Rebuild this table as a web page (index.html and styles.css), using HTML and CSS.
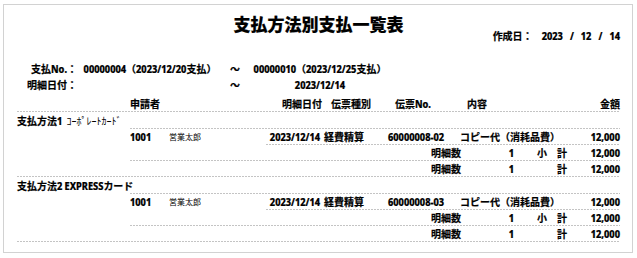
FILE: index.html
```html
<!DOCTYPE html>
<html lang="ja">
<head>
<meta charset="utf-8">
<title>支払方法別支払一覧表</title>
<link rel="stylesheet" href="styles.css">
</head>
<body>
<div class="report">
  <h1 class="title">支払方法別支払一覧表</h1>
  <div class="created"><span class="created-label">作成日：</span><span class="created-date"><span class="n">2023</span><span class="n sl">/</span><span class="n">12</span><span class="n sl">/</span><span class="n">14</span></span></div>
  <div class="cond">
    <div class="cond-row">
      <span class="cond-label">支払<span class="n">No.</span>：</span>
      <span class="cond-from"><span class="n">00000004</span>（<span class="n">2023/12/20</span>支払）</span>
      <span class="cond-tilde">～</span>
      <span class="cond-to"><span class="n">00000010</span>（<span class="n">2023/12/25</span>支払）</span>
    </div>
    <div class="cond-row">
      <span class="cond-label">明細日付：</span>
      <span class="cond-from"></span>
      <span class="cond-tilde">～</span>
      <span class="cond-to"><span class="n">2023/12/14</span></span>
    </div>
  </div>

  <div class="thead dash">
    <span class="c-method"></span>
    <span class="c-applicant">申請者</span>
    <span class="c-date">明細日付</span>
    <span class="c-type">伝票種別</span>
    <span class="c-no">伝票<span class="n">No.</span></span>
    <span class="c-content">内容</span>
    <span class="c-amount">金額</span>
  </div>

  <section class="method">
    <div class="sec-row">
      <span class="sec-label">支払方法<span class="n">1</span> <span class="kana">ｺｰﾎﾟﾚｰﾄｶｰﾄﾞ</span></span>
      <span class="sec-fill dash"></span>
    </div>
    <div class="data-row">
      <span class="code"><span class="n">1001</span></span>
      <span class="name">営業太郎</span>
      <div class="detail dash">
        <span class="c-date"><span class="n">2023/12/14</span></span>
        <span class="c-type">経費精算</span>
        <span class="c-no"><span class="n">60000008-02</span></span>
        <span class="c-content">コピー代（消耗品費）</span>
        <span class="c-amount"><span class="n">12,000</span></span>
      </div>
    </div>
    <div class="sum-row sub dash">
      <span class="s-label">明細数</span>
      <span class="s-count"><span class="n">1</span></span>
      <span class="s-kind">小　計</span>
      <span class="s-amount"><span class="n">12,000</span></span>
    </div>
    <div class="sum-row total dash">
      <span class="s-label">明細数</span>
      <span class="s-count"><span class="n">1</span></span>
      <span class="s-kind">計</span>
      <span class="s-amount"><span class="n">12,000</span></span>
    </div>
  </section>

  <section class="method">
    <div class="sec-row">
      <span class="sec-label">支払方法<span class="n">2</span> <span class="n">EXPRESS</span>カード</span>
      <span class="sec-fill dash"></span>
    </div>
    <div class="data-row">
      <span class="code"><span class="n">1001</span></span>
      <span class="name">営業太郎</span>
      <div class="detail dash">
        <span class="c-date"><span class="n">2023/12/14</span></span>
        <span class="c-type">経費精算</span>
        <span class="c-no"><span class="n">60000008-03</span></span>
        <span class="c-content">コピー代（消耗品費）</span>
        <span class="c-amount"><span class="n">12,000</span></span>
      </div>
    </div>
    <div class="sum-row sub dash">
      <span class="s-label">明細数</span>
      <span class="s-count"><span class="n">1</span></span>
      <span class="s-kind">小　計</span>
      <span class="s-amount"><span class="n">12,000</span></span>
    </div>
    <div class="sum-row total dash">
      <span class="s-label">明細数</span>
      <span class="s-count"><span class="n">1</span></span>
      <span class="s-kind">計</span>
      <span class="s-amount"><span class="n">12,000</span></span>
    </div>
  </section>
</div>
</body>
</html>
```

FILE: styles.css
```css
* { box-sizing: border-box; }
html, body { margin: 0; padding: 0; background: #fff; }
body {
  font-family: "Noto Sans CJK JP", "Noto Sans", sans-serif;
  font-size: 10px;
  font-weight: 700;
  color: #000;
}
/* narrow latin/digit runs: small font stretched vertically */
.n {
  display: inline-block;
  font-family: "Noto Sans", "Liberation Sans", sans-serif;
  font-size: 9.2px;
  font-weight: 800;
  line-height: 10px;
  transform: scaleY(1.15);
  transform-origin: 50% 55%;
}
.report {
  width: 630px;
  height: 249px;
  margin: 4px 0 0 3px;
  border: 1px solid #d2d2d2;
  padding: 9px 12px 0 13px;
  -webkit-text-stroke: 0.2px #000;
}
.title {
  margin: 0;
  text-align: center;
  font-size: 17px;
  line-height: 20px;
  font-weight: 900;
}
.created {
  margin-top: -4px;
  line-height: 12px;
  text-align: right;
  white-space: nowrap;
}
.created-date { margin-left: 9px; }
.created-date .sl { margin: 0 7px; }

.cond { margin-top: 19px; }
.cond-row { display: flex; line-height: 16px; white-space: nowrap; }
.cond-label { width: 60px; text-align: right; }
.cond-from { width: 140px; margin-left: 3px; text-align: center; }
.cond-tilde { width: 30px; text-align: center; }
.cond-to { width: 140px; text-align: center; }

.dash {
  background-image: repeating-linear-gradient(90deg, #c4c4c4 0 2px, transparent 2px 3px);
  background-size: 100% 1px;
  background-position: left bottom;
  background-repeat: no-repeat;
  padding-bottom: 1px;
}

.thead {
  display: flex;
  margin-top: 3px;
  line-height: 15px;
  white-space: nowrap;
}
.c-method { width: 113px; }
.c-applicant { width: 143px; }
.c-date { width: 58px; text-align: center; }
.c-type { width: 64px; }
.c-no { width: 72px; }
.c-content { flex: 1; }
.c-amount { width: 60px; text-align: right; }

.sec-row { display: flex; line-height: 17px; white-space: nowrap; }
.sec-label { width: 113px; }
.kana { font-weight: 400; font-size: 10px; margin-left: 2px; -webkit-text-stroke: 0; }
.sec-fill { flex: 1; }

.data-row { display: flex; margin-left: 113px; line-height: 15px; white-space: nowrap; }
.code { width: 41px; }
.name { width: 102px; font-weight: 400; font-size: 8px; -webkit-text-stroke: 0; }
.detail { flex: 1; display: flex; }

.sum-row {
  display: grid;
  grid-template-columns: 1fr 53px 53px 53px;
  line-height: 15px;
  white-space: nowrap;
}
.sum-row.sub { margin-left: 113px; }
.s-label, .s-count, .s-kind, .s-amount { text-align: right; }
```
